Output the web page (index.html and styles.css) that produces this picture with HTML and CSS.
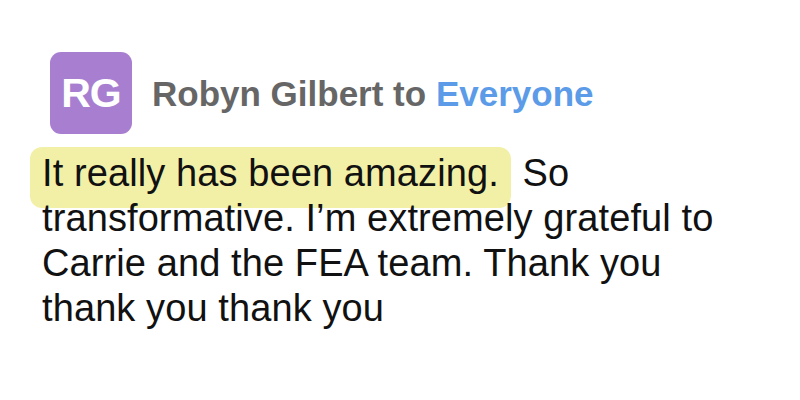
FILE: index.html
```html
<!DOCTYPE html>
<html>
<head>
<meta charset="utf-8">
<link rel="stylesheet" href="styles.css">
</head>
<body>
<div class="message">
  <div class="header">
    <div class="avatar">RG</div>
    <div class="sender">Robyn Gilbert to <span class="to">Everyone</span></div>
  </div>
  <p class="text"><span class="hl">It really has been amazing.</span> So transformative. I’m extremely grateful to Carrie and the FEA team. Thank you thank you thank you</p>
</div>
</body>
</html>
```

FILE: styles.css
```css
html, body {
  margin: 0;
  padding: 0;
  background: #ffffff;
}
body {
  font-family: "Liberation Sans", Arial, Helvetica, sans-serif;
  width: 800px;
  height: 400px;
  overflow: hidden;
}
.message {
  padding: 52px 0 0 42px;
}
.header {
  display: flex;
  align-items: center;
  gap: 20px;
  margin-left: 8px;
}
.avatar {
  width: 82px;
  height: 82px;
  border-radius: 11px;
  background: #a87fd0;
  color: #ffffff;
  font-weight: bold;
  font-size: 41px;
  display: flex;
  align-items: center;
  justify-content: center;
  letter-spacing: -1px;
}
.sender {
  font-weight: bold;
  font-size: 35px;
  color: #666666;
  padding-top: 2px;
}
.to {
  color: #5b9be8;
}
.text {
  margin: 17px 0 0 0;
  width: 700px;
  font-size: 38px;
  letter-spacing: 0.1px;
  line-height: 45px;
  color: #111111;
}
.hl {
  background: #f2f0a6;
  border-radius: 12px;
  padding: 5px 12px 14px 12px;
  margin-left: -12px;
  margin-right: 1px;
}
```
